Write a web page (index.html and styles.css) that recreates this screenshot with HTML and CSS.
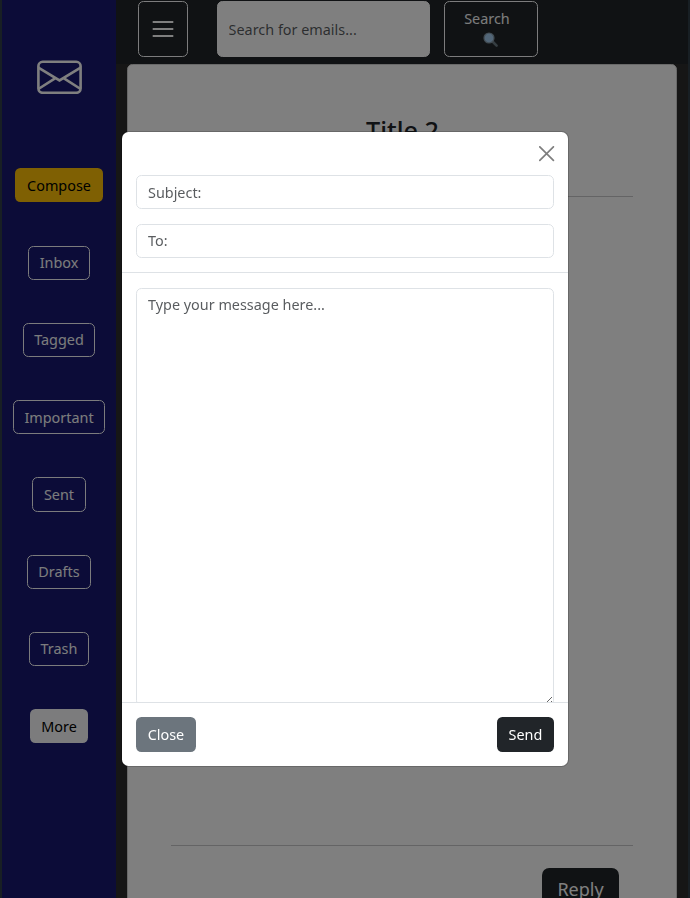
FILE: index.html
```html
<!DOCTYPE html>
<html lang="en">
<head>
<meta charset="utf-8">
<title>Mail</title>
<link rel="stylesheet" href="styles.css">
</head>
<body>
<div class="app">
  <aside class="sidebar">
    <svg class="logo" viewBox="0 0 45 34" fill="none" stroke="#fff" stroke-width="2.6">
      <rect x="1.4" y="1.8" width="42.2" height="31" rx="4.3"/>
      <path d="M1.4 7.6 22.5 20.4 43.6 7.6M1.4 29 18 18.4M43.6 29 27 18.4"/>
    </svg>
    <nav class="folders">
      <button class="btn btn-warning">Compose</button>
      <button class="btn btn-outline">Inbox</button>
      <button class="btn btn-outline">Tagged</button>
      <button class="btn btn-outline">Important</button>
      <button class="btn btn-outline">Sent</button>
      <button class="btn btn-outline">Drafts</button>
      <button class="btn btn-outline">Trash</button>
      <button class="btn btn-light">More</button>
    </nav>
  </aside>
  <main class="main">
    <header class="topbar">
      <button class="btn btn-outline menu">
        <svg width="22" height="18" viewBox="0 0 22 18" stroke="#fff" stroke-width="2"><path d="M.7 2h20.6M.7 9h20.6M.7 16h20.6"/></svg>
      </button>
      <input class="field search" type="text" placeholder="Search for emails...">
      <button class="btn btn-outline go">
        <span>Search</span>
        <svg width="16" height="16" viewBox="0 0 16 16"><path d="m9 9 4.6 4.6" stroke="#6b7a83" stroke-width="2.6" stroke-linecap="round"/><circle cx="6" cy="6" r="5" fill="#a4cdf0" stroke="#8598a6" stroke-width="1.2"/></svg>
      </button>
    </header>
    <article class="mail">
      <h2 class="title">Title 2</h2>
      <hr class="rule">
      <div class="content"></div>
      <hr class="rule">
      <button class="btn btn-dark reply">Reply</button>
    </article>
  </main>
</div>
<div class="backdrop">
  <section class="modal">
    <header class="modal-head">
      <button class="close" aria-label="Close">
        <svg width="16" height="16" viewBox="0 0 16 16" stroke="#000" stroke-width="1.7" stroke-linecap="round"><path d="m.8.8 13.6 13.6M14.4.8.8 14.4"/></svg>
      </button>
      <input class="field" type="text" placeholder="Subject:">
      <input class="field to" type="text" placeholder="To:">
    </header>
    <div class="modal-body">
      <textarea class="field message" placeholder="Type your message here..."></textarea>
    </div>
    <footer class="modal-foot">
      <button class="btn btn-secondary">Close</button>
      <button class="btn btn-dark">Send</button>
    </footer>
  </section>
</div>
</body>
</html>
```
FILE: styles.css
```css
* { box-sizing: border-box; }
body {
  margin: 0;
  height: 898px;
  overflow: hidden;
  background: #303f48;
  font: 14.4px/21.6px "Noto Sans", sans-serif;
  color: #212529;
}
button, input, textarea { font: inherit; margin: 0; }
.app { display: flex; height: 898px; padding: 0 2px; overflow: hidden; }
.sidebar {
  width: 114px;
  flex: none;
  background: #191970;
  display: flex;
  flex-direction: column;
  align-items: center;
  padding-top: 60px;
}
.logo { width: 45px; height: 34px; flex: none; }
.folders {
  display: flex;
  flex-direction: column;
  align-items: center;
  gap: 43.1px;
  margin-top: 74.3px;
}
.btn {
  flex: none;
  border: 1px solid transparent;
  border-radius: 5.4px;
  padding: 5.4px 10.7px;
  height: 34.2px;
  white-space: nowrap;
}
.btn-warning { background: #ffc107; color: #000; }
.btn-outline { background: transparent; border-color: #f8f9fa; color: #f8f9fa; }
.btn-light { background: #f8f9fa; color: #000; }
.btn-dark { background: #212529; color: #fff; }
.btn-secondary { background: #6c757d; color: #fff; }
.main { flex: 1; min-width: 0; background: #2c2c2c; }
.topbar {
  height: 64px;
  background: #212529;
  display: flex;
  padding: 1px 0 0 22px;
}
.menu {
  width: 50px;
  height: 56px;
  padding: 0;
  display: flex;
  align-items: center;
  justify-content: center;
}
.field {
  display: block;
  width: 100%;
  height: 34px;
  padding: 5.4px 11px;
  border: 1px solid #dee2e6;
  border-radius: 5.4px;
  background: #fff;
  color: #212529;
  outline: none;
}
.field::placeholder { color: rgba(33, 37, 41, .75); opacity: 1; }
.to { padding: 4.4px 11px 6.4px; }
.search { width: 213px; height: 56px; margin-left: 29px; padding-left: 10.6px; border-color: #fff; }
.go {
  width: 94px;
  height: 56px;
  margin-left: 14px;
  padding: 6px 0 0;
  display: flex;
  flex-direction: column;
  align-items: center;
  justify-content: flex-start;
}
.go span { margin-right: 8px; }
.go svg { margin-top: 2px; }
.menu svg { margin-bottom: 0; }
.mail {
  height: 860px;
  margin: 0 11px;
  padding: 48px 43px 0;
  background: #fff;
  border: 1px solid #d2d2d2;
  border-radius: 5.4px;
  display: flex;
  flex-direction: column;
}
.title { margin: 0; padding-left: 1px; font-size: 25.2px; line-height: 34px; font-weight: 500; text-align: center; }
.rule { width: 100%; height: 1px; flex: none; margin: 0; border: 0; background: #c8c9ca; }
.title + .rule { margin-top: 49px; }
.content { height: 648px; flex: none; }
.reply {
  align-self: flex-end;
  width: 77px;
  height: 44px;
  margin: 22px 14px 0 0;
  padding: 0;
  font-size: 18px;
  border-radius: 7.2px;
}
.backdrop { position: fixed; inset: 0; background: rgba(0, 0, 0, .5); padding: 132px 0 0 122px; }
.modal {
  width: 446px;
  height: 634px;
  background: #fff;
  background-clip: padding-box;
  border-radius: 6.5px;
  box-shadow: 0 0 0 1px rgba(0, 0, 0, .18);
  display: flex;
  flex-direction: column;
  overflow: hidden;
}
.modal-head {
  height: 141px;
  flex: none;
  padding: 14px;
  display: flex;
  flex-direction: column;
  border-bottom: 1px solid #dee2e6;
}
.modal-head .field { flex: none; }
.modal-head .field + .field { margin-top: 15px; }
.close {
  align-self: flex-end;
  width: 16px;
  height: 16px;
  margin: 0 -1px 13px 0;
  padding: 0;
  border: 0;
  background: none;
  opacity: .5;
  line-height: 0;
}
.modal-body { flex: 1; min-height: 0; padding: 15px 14px 0; overflow: hidden; }
.message { height: 418px; padding-right: 10px; resize: vertical; overflow: hidden; }
.modal-foot {
  height: 64px;
  flex: none;
  padding: 14px;
  border-top: 1px solid #dee2e6;
  display: flex;
  justify-content: space-between;
}
.modal-foot .btn { height: 35px; }
```
